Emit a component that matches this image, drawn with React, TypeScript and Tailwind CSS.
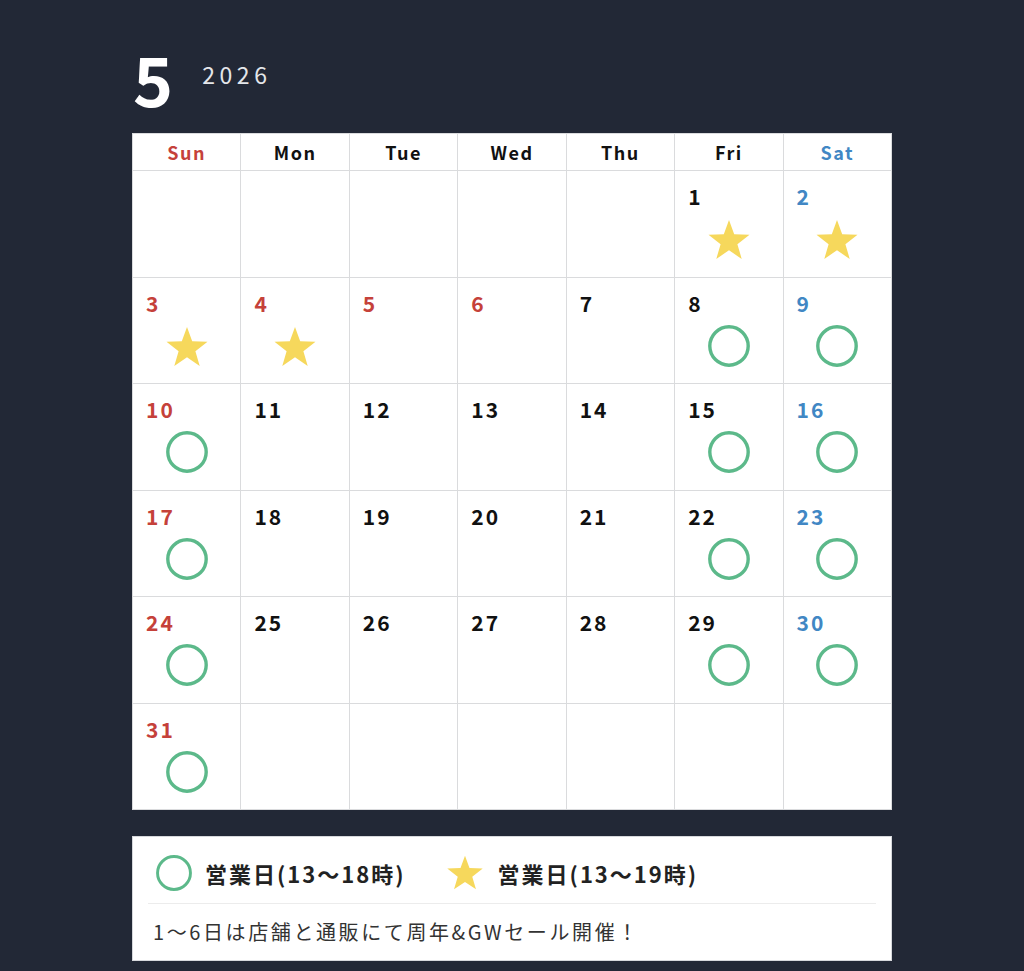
import React from "react";

const FONT = { fontFamily: '"Noto Sans CJK JP", "Noto Sans", sans-serif' };

type Mark = "circle" | "star" | null;

const HEAD = ["Sun", "Mon", "Tue", "Wed", "Thu", "Fri", "Sat"];
const HOLIDAYS = [4, 5, 6];

function Circle({ size = 42 }: { size?: number }) {
  return (
    <svg width={size} height={size} viewBox="0 0 42 42">
      <circle cx="21" cy="21" r="19.2" fill="none" stroke="#5cb98a" strokeWidth="3.4" />
    </svg>
  );
}

function Star({ size = 44 }: { size?: number }) {
  return (
    <svg width={size} height={size} viewBox="0 0 44 44">
      <polygon
        fill="#f6d85c"
        points="22,2 27.2,16.3 42.5,16.8 30.4,26.2 34.7,40.9 22,32.3 9.3,40.9 13.6,26.2 1.5,16.8 16.8,16.3"
      />
    </svg>
  );
}

function markFor(d: number): Mark {
  if (d >= 1 && d <= 4) return "star";
  const dow = (d + 4) % 7; // May 1 2026 is Friday
  if (d >= 8 && (dow === 0 || dow === 5 || dow === 6)) return "circle";
  return null;
}

export default function App() {
  const cells: (number | null)[] = [];
  for (let i = 0; i < 5; i++) cells.push(null);
  for (let d = 1; d <= 31; d++) cells.push(d);
  while (cells.length < 42) cells.push(null);

  return (
    <div className="min-h-[971px] w-full bg-[#222836] pb-[13px]" style={FONT}>
      <div className="mx-auto w-[760px] pt-[34px]">
        <div className="flex items-center pl-[1px]">
          <span className="text-[68px] font-bold leading-[88px] text-white">5</span>
          <span className="mb-[7px] ml-[29px] text-[23px] tracking-[0.2em] text-[#e4e6ea]">2026</span>
        </div>

        <div className="mt-[11px] grid grid-cols-7 gap-px bg-[#dadbdd] p-px">
          {HEAD.map((h, i) => (
            <div
              key={h}
              className={`flex h-[36px] items-center justify-center bg-white text-[18px] font-bold tracking-[1.5px] ${
                i === 0 ? "text-[#c5413a]" : i === 6 ? "text-[#4187c4]" : "text-[#111]"
              }`}
            >
              {h}
            </div>
          ))}
          {cells.map((d, idx) => {
            const col = idx % 7;
            const m = d ? markFor(d) : null;
            const red = col === 0 || (d !== null && HOLIDAYS.includes(d));
            return (
              <div key={idx} className="flex h-[105.5px] flex-col bg-white">
                {d && (
                  <>
                    <div
                      className={`pl-[13px] pt-[10px] text-[21px] font-bold leading-[30px] tracking-[2px] ${
                        red ? "text-[#c5413a]" : col === 6 ? "text-[#4187c4]" : "text-[#111]"
                      }`}
                    >
                      {d}
                    </div>
                    <div className="mt-[7px] flex justify-center">
                      {m === "circle" && <Circle />}
                      {m === "star" && <Star />}
                    </div>
                  </>
                )}
              </div>
            );
          })}
        </div>

        <div className="mt-[26px] border border-[#d6d8dc] bg-white px-[15px] pb-[14px]">
          <div className="flex items-center pl-[8px] pt-[17px] pb-[11px]">
            <Circle size={36} />
            <span className="ml-[13px] text-[22px] font-bold tracking-[2px] text-[#222]">営業日(13〜18時)</span>
            <span className="ml-[40px]">
              <Star size={38} />
            </span>
            <span className="ml-[14px] text-[22px] font-bold tracking-[2px] text-[#222]">営業日(13〜19時)</span>
          </div>
          <div className="border-t border-[#ececec] pt-[14px] pl-[5px] text-[20px] leading-[28px] tracking-[2.6px] text-[#333]">
            1〜6日は店舗と通販にて周年&amp;GWセール開催！
          </div>
        </div>
      </div>
    </div>
  );
}
